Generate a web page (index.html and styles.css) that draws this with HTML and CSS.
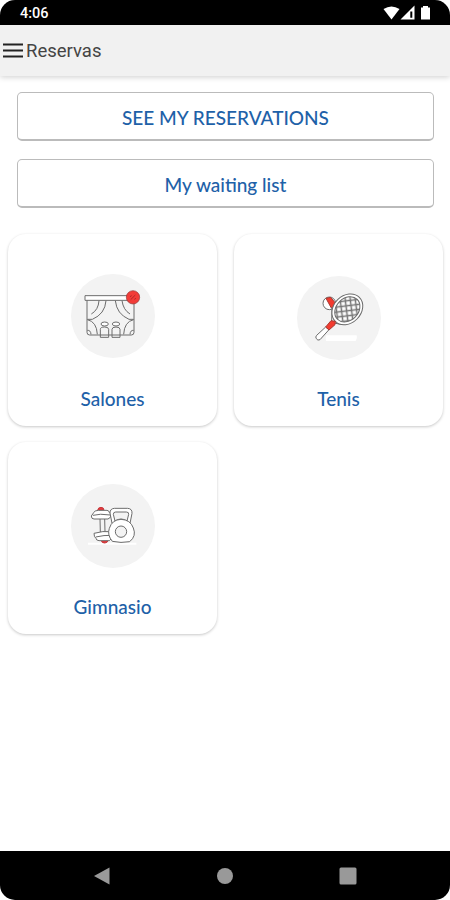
FILE: index.html
```html
<!DOCTYPE html>
<html lang="es">
<head>
    <meta charset="UTF-8">
    <meta name="viewport" content="width=device-width, initial-scale=1.0">
    <title>Reservas</title>
    <link rel="stylesheet" href="styles.css">
</head>
<body>
    <div class="screen">
        <div class="status-bar">
            <span class="time">4:06</span>
            <svg class="status-icons" width="50" height="16" viewBox="0 0 50 16">
                <path fill="#fff" d="M0.500 4Q8.500 -1 16.500 4L8.500 14.500Z"/>
                <path fill="#fff" d="M17.500 14.500L31.500 0.500V14.500Z"/>
                <path fill="#000" d="M27.300 6.500H29.300V12.800H27.300Z"/>
                <path fill="#fff" d="M38 2.500h2V1h5v1.500h2v12h-9Z"/>
            </svg>
        </div>
        <header class="toolbar">
            <svg class="menu-icon" width="20" height="15" viewBox="0 0 20 15">
                <path stroke="#222" stroke-width="1.800" d="M0 1.500H20M0 7.500H20M0 13.500H20"/>
            </svg>
            <h1>Reservas</h1>
        </header>
        <main class="content">
            <div class="actions">
                <button class="btn">SEE MY RESERVATIONS</button>
                <button class="btn">My waiting list</button>
            </div>
            <div class="cards">
                <div class="card">
                    <svg class="card-icon" viewBox="19 12 252 252">
                        <circle class="disc" cx="145" cy="138" r="126"/>
                        <g class="lines">
                            <rect x="61" y="77" width="150" height="14" fill="#fff"/>
                            <path d="M67 91V187Q67 195 75 195H200Q208 195 208 187V91"/>
                            <path d="M103 92Q101 120 80 132M124 92Q121 132 83 148H68"/>
                            <path d="M152 92Q156 132 193 148H207M172 92Q176 120 196 132"/>
                            <path d="M68 149Q96 155 98 193M207 149Q179 155 177 193M68 181Q78 180 79 193M207 181Q197 180 196 193"/>
                            <path d="M107 202V178Q107 171 120 171Q132 171 132 178V202M142 202V178Q142 171 154 171Q166 171 166 178V202M107 202H132M142 202H166"/>
                            <ellipse cx="120" cy="162" rx="11" ry="6" fill="#fff"/>
                            <ellipse cx="154" cy="162" rx="11" ry="6" fill="#fff"/>
                        </g>
                        <circle cx="205" cy="82" r="20" fill="#f23c38" stroke="#8f3a38" stroke-width="2"/>
                        <path d="M198 89L212 75M196 80L201 77M209 88L214 85" fill="none" stroke="#a02525" stroke-width="2.500"/>
                    </svg>
                    <span class="card-title">Salones</span>
                </div>
                <div class="card">
                    <svg class="card-icon icon-low" viewBox="18 17 252 252">
                        <defs>
                            <pattern id="strings" width="15" height="15" patternUnits="userSpaceOnUse" patternTransform="rotate(38)">
                                <rect width="15" height="15" fill="#fff"/>
                                <path d="M0 7.500H15M7.500 0V15" stroke="#777" stroke-width="4.500"/>
                            </pattern>
                        </defs>
                        <circle class="disc" cx="144" cy="143" r="126"/>
                        <path d="M106 195H197Q200 204 194 212H105Q102 203 106 195Z" fill="#fff"/>
                        <g class="lines">
                            <circle cx="115" cy="99" r="19" fill="#fff"/>
                            <path d="M105 84L119 81L133 98L131 110L121 113Z" fill="#f33b2f" stroke="#a63a34"/>
                            <path d="M123 111L122 157L145 161L164 162" fill="#fff"/>
                            <ellipse cx="169" cy="117" rx="51" ry="41" fill="#fff" transform="rotate(-45 169 117)"/>
                            <ellipse cx="169" cy="117" rx="42" ry="33" fill="url(#strings)" transform="rotate(-45 169 117)"/>
                            <path d="M104 170L114 178L87 208Q80 212 76 205Q72 200 77 195Z" fill="#fff"/>
                            <path d="M120 151L133 153L132 163L114 179L104 170Z" fill="#f33b2f" stroke="#a63a34"/>
                        </g>
                    </svg>
                    <span class="card-title">Tenis</span>
                </div>
                <div class="card">
                    <svg class="card-icon icon-low" viewBox="17 17 252 252">
                        <circle class="disc" cx="143" cy="143" r="126"/>
                        <path d="M68 193H213V199H68Z" fill="#fff"/>
                        <g class="lines">
                            <path d="M97 96Q98 87 107 87Q116 87 116 96Z" fill="#e9393d" stroke="#c63a3d"/>
                            <path d="M108 187H128Q126 194 118 194Q109 194 108 187Z" fill="#e9393d" stroke="#c63a3d"/>
                            <path d="M104 121L105 162M118 121L119 160"/>
                            <path d="M85 103Q87 96 100 96H125Q132 97 132 103L135 104Q139 108 135 117L128 122H86Q78 122 78 113Z" fill="#fff"/>
                            <path d="M83 111Q103 105 135 110"/>
                            <path d="M86 165Q112 157 140 160L146 170Q144 178 138 181L132 187H101Q92 186 92 180Q86 177 86 165Z" fill="#fff"/>
                            <path d="M91 176Q115 170 143 171"/>
                            <path fill-rule="evenodd" d="M140 135L134 104Q134 91 147 90H187Q201 91 200 105L194 135ZM149 128L144 108Q144 101 151 101H183Q191 101 190 108L185 128Q167 116 149 128Z" fill="#fff"/>
                            <path d="M141 189Q125 170 132 150Q140 124 167 123Q195 124 204 149Q214 173 193 190Q167 195 141 189Z" fill="#fff"/>
                            <circle cx="167" cy="160" r="17" fill="#f3f3f3"/>
                        </g>
                    </svg>
                    <span class="card-title">Gimnasio</span>
                </div>
            </div>
        </main>
        <nav class="nav-bar">
            <svg width="18" height="18" viewBox="0 0 18 18"><path fill="#999" d="M1 9L16.500 0.500V17.500Z"/></svg>
            <svg width="18" height="18" viewBox="0 0 18 18"><circle cx="9" cy="9" r="8" fill="#999"/></svg>
            <svg width="18" height="18" viewBox="0 0 18 18"><rect x="0.500" y="0.500" width="17" height="17" rx="1.500" fill="#999"/></svg>
        </nav>
    </div>
</body>
</html>
```
FILE: styles.css
```css
body {
    margin: 0;
    background: #fff;
    font-family: Lato, sans-serif;
}
.screen {
    width: 450px;
    height: 900px;
    display: flex;
    flex-direction: column;
    border-radius: 15px;
    overflow: hidden;
    background: #fff;
}
.status-bar {
    height: 25px;
    flex: none;
    box-sizing: border-box;
    padding: 2px 17px 0 20px;
    background: #000;
    color: #fff;
    display: flex;
    align-items: center;
    justify-content: space-between;
}
.time {
    font: 500 14.500px Roboto, sans-serif;
}
.status-icons {
    margin-top: -2px;
}
.toolbar {
    height: 51px;
    flex: none;
    padding: 0 3px;
    background: #f1f1f1;
    box-shadow: 0 1px 6px rgba(0, 0, 0, 0.2);
    display: flex;
    align-items: center;
    gap: 3px;
}
.toolbar h1 {
    margin: 0;
    padding-top: 1px;
    font: 400 18.500px Roboto, sans-serif;
    color: #444;
}
.content {
    flex: 1;
}
.actions {
    padding: 16px 16px 0 17px;
    display: flex;
    flex-direction: column;
    gap: 18px;
}
.btn {
    height: 49px;
    padding: 2px 0 0;
    border: 1px solid #bbb;
    border-bottom-width: 2px;
    border-radius: 5px;
    background: #fff;
    color: #1e61a8;
    font: 500 19px Lato, sans-serif;
}
.cards {
    display: grid;
    grid-template-columns: 209px 209px;
    gap: 16px 17px;
    padding: 26px 8px 0;
}
.card {
    height: 192px;
    box-sizing: border-box;
    padding-top: 40px;
    border-radius: 18px;
    background: #fff;
    box-shadow: 0 1px 3px rgba(0, 0, 0, 0.22);
    display: flex;
    flex-direction: column;
    align-items: center;
}
.card-icon {
    width: 84px;
    height: 84px;
    margin-bottom: 29px;
}
.icon-low {
    margin-top: 2px;
    margin-bottom: 27px;
}
.card-title {
    font-size: 19px;
    font-weight: 500;
    line-height: 23px;
    color: #1e61a8;
}
.disc {
    fill: #f3f3f3;
}
.lines {
    fill: none;
    stroke: #6c6c6c;
    stroke-width: 3;
    stroke-linejoin: round;
}
.nav-bar {
    height: 49px;
    flex: none;
    background: #000;
    display: flex;
    align-items: center;
    justify-content: center;
    gap: 105px;
}
```
